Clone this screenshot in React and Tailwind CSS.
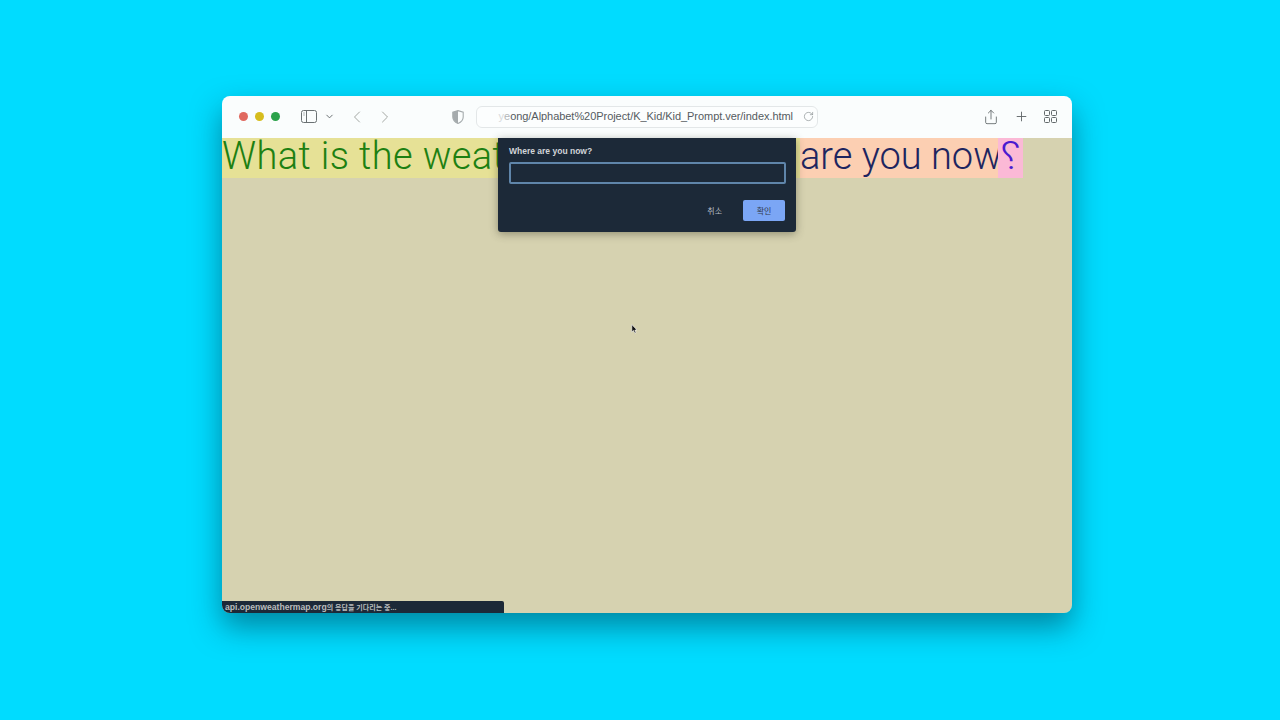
import { ChevronDown, ChevronLeft, ChevronRight, Plus, RotateCw, Share } from "lucide-react";

function SidebarIcon() {
	return (
		<svg width="16" height="13" viewBox="0 0 16 13" fill="none" stroke="#6a7173" strokeWidth="1">
			<rect x="0.5" y="0.5" width="15" height="12" rx="2" />
			<path d="M5.5 0.5v12" />
			<path d="M2 3h2M2 5h2" stroke="#b4b9ba" />
		</svg>
	);
}

function ShieldIcon() {
	return (
		<svg width="12" height="14" viewBox="0 0 12 14">
			<path d="M6 0.6 11.2 2.2V7c0 3-2.2 5.2-5.2 6.4C3 12.2.8 10 .8 7V2.2Z" fill="none" stroke="#a5abad" strokeWidth="1.1" />
			<path d="M6 0.6V13.4C3 12.2.8 10 .8 7V2.2Z" fill="#a5abad" />
		</svg>
	);
}

function GridIcon() {
	return (
		<svg width="13" height="13" viewBox="0 0 13 13" fill="none" stroke="#62696b" strokeWidth="1">
			<rect x="0.5" y="0.5" width="5" height="5" rx="1" />
			<rect x="7.5" y="0.5" width="5" height="5" rx="1" />
			<rect x="0.5" y="7.5" width="5" height="5" rx="1" />
			<rect x="7.5" y="7.5" width="5" height="5" rx="1" />
		</svg>
	);
}

function Toolbar() {
	return (
		<div className="flex h-[42px] items-center bg-[#fafdfd] pb-[1px] pl-[17px]">
			<span className="h-[9px] w-[9px] rounded-full bg-[#e0695f]" />
			<span className="ml-[7px] h-[9px] w-[9px] rounded-full bg-[#d6bd1e]" />
			<span className="ml-[7px] h-[9px] w-[9px] rounded-full bg-[#2ba24a]" />
			<div className="ml-[21px] flex"><SidebarIcon /></div>
			<ChevronDown className="ml-[7px] text-[#5f6668]" size={11} strokeWidth={2} />
			<ChevronLeft className="ml-[12px] text-[#a4a8a4]" size={20} strokeWidth={1.2} />
			<ChevronRight className="ml-[8px] text-[#a4a8a4]" size={20} strokeWidth={1.2} />
			<div className="ml-[57px] flex"><ShieldIcon /></div>
			<div className="ml-[12px] flex h-[22px] w-[342px] items-center justify-end rounded-[6px] border border-[#e3e7e8] bg-[#fcfefe] pr-[3px]">
				<span className="font-['Liberation_Sans',sans-serif] text-[11px] tracking-[-0.05px] whitespace-nowrap text-[#555b5e]">
					<span className="text-[#d8dbdc]">y</span><span className="text-[#b4b8ba]">e</span>ong/Alphabet%20Project/K_Kid/Kid_Prompt.ver/index.html
				</span>
				<RotateCw className="ml-[10px] text-[#8b9193]" size={11} strokeWidth={1.5} />
			</div>
			<Share className="ml-[165px] text-[#62696b]" size={16} strokeWidth={1.3} />
			<Plus className="ml-[15px] text-[#62696b]" size={15} strokeWidth={1.5} />
			<div className="ml-[15px] flex"><GridIcon /></div>
		</div>
	);
}

function Prompt() {
	return (
		<div className="absolute top-[42px] left-[276px] h-[94px] w-[298px] rounded-b-[3px] bg-[#1c2938] px-[11px] pt-[8px] shadow-[0_2px_8px_rgba(60,60,40,0.45)] font-['Liberation_Sans',sans-serif]">
			<div className="text-[8.5px] leading-[10px] font-bold text-[#d2d5d8]">Where are you now?</div>
			<div className="mt-[6px] h-[22px] w-[277px] rounded-[2px] border-2 border-[#5f85aa]" />
			<div className="mt-[16px] flex items-center justify-end">
				<span className="mr-[21px] font-['Noto_Sans_CJK_KR',sans-serif] text-[8px] text-[#b5bcc4]">취소</span>
				<button className="h-[21px] w-[42px] rounded-[2px] bg-[#7ba6f5] font-['Noto_Sans_CJK_KR',sans-serif] text-[8px] text-[#333c50]">확인</button>
			</div>
		</div>
	);
}

export default function App() {
	return (
		<div className="h-[720px] w-[1280px] overflow-hidden bg-[#00dcff] pt-[96px] pl-[222px]">
			<div className="relative flex h-[517px] w-[850px] flex-col overflow-hidden rounded-[8px] shadow-[0_14px_30px_rgba(0,50,70,0.5)]">
				<Toolbar />
				<div className="flex-1 bg-[#d6d2b0]">
					<div className="flex h-[40px] font-['Roboto',sans-serif] text-[38px] leading-[36px] font-light whitespace-nowrap">
						<span className="w-[578px] bg-[#e6e196] tracking-[0.4px] text-[#1d8012]">What is the weat</span>
						<span className="w-[198px] bg-[#fccfb2] text-[#1d2560]">are you now</span>
						<span className="w-[25px] bg-[#fbb9d6] text-center text-[#4a1ad0]">
							<span className="inline-block scale-x-[-1.15]">?</span>
						</span>
					</div>
				</div>
				<Prompt />
				<div className="absolute bottom-0 left-0 h-[12px] w-[282px] rounded-tr-[2px] bg-[#1c2938] pl-[3px] font-['Liberation_Sans','Noto_Sans_CJK_KR',sans-serif] text-[8.6px] leading-[12px] font-bold whitespace-nowrap text-[#b9bcbd]">
					api.openweathermap.org<span className="text-[7px]">의 응답을 기다리는 중...</span>
				</div>
				<svg className="absolute top-[228px] left-[409px]" width="7" height="10" viewBox="0 0 7 10">
					<path d="M0.8 0.6V8L2.5 6.4 3.8 9.2 5 8.6 3.8 6H6Z" fill="#111" stroke="#fff" strokeWidth="0.6" />
				</svg>
			</div>
		</div>
	);
}
